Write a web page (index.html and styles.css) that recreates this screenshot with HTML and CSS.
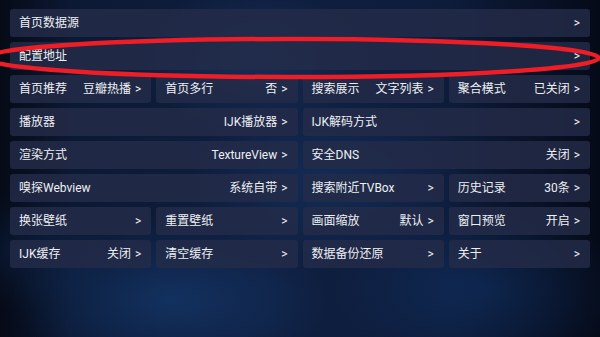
FILE: index.html
```html
<!DOCTYPE html>
<html lang="zh">
<head>
<meta charset="utf-8">
<link rel="stylesheet" href="styles.css">
</head>
<body>
<div class="screen">
  <div class="grid">
    <div class="item full"><span>首页数据源</span><span class="val">&gt;</span></div>
    <div class="item full"><span>配置地址</span><span class="val">&gt;</span></div>

    <div class="item"><span>首页推荐</span><span class="val">豆瓣热播 &gt;</span></div>
    <div class="item"><span>首页多行</span><span class="val">否 &gt;</span></div>
    <div class="item"><span>搜索展示</span><span class="val">文字列表 &gt;</span></div>
    <div class="item"><span>聚合模式</span><span class="val">已关闭 &gt;</span></div>

    <div class="item half"><span>播放器</span><span class="val">IJK播放器 &gt;</span></div>
    <div class="item half"><span>IJK解码方式</span><span class="val">&gt;</span></div>

    <div class="item half"><span>渲染方式</span><span class="val">TextureView &gt;</span></div>
    <div class="item half"><span>安全DNS</span><span class="val">关闭 &gt;</span></div>

    <div class="item half"><span>嗅探Webview</span><span class="val">系统自带 &gt;</span></div>
    <div class="item"><span>搜索附近TVBox</span><span class="val">&gt;</span></div>
    <div class="item"><span>历史记录</span><span class="val">30条 &gt;</span></div>

    <div class="item"><span>换张壁纸</span><span class="val">&gt;</span></div>
    <div class="item"><span>重置壁纸</span><span class="val">&gt;</span></div>
    <div class="item"><span>画面缩放</span><span class="val">默认 &gt;</span></div>
    <div class="item"><span>窗口预览</span><span class="val">开启 &gt;</span></div>

    <div class="item"><span>IJK缓存</span><span class="val">关闭 &gt;</span></div>
    <div class="item"><span>清空缓存</span><span class="val">&gt;</span></div>
    <div class="item"><span>数据备份还原</span><span class="val">&gt;</span></div>
    <div class="item"><span>关于</span><span class="val">&gt;</span></div>
  </div>
  <svg class="mark" viewBox="0 0 600 337" width="600" height="337">
    <ellipse cx="292" cy="58" rx="307" ry="19" fill="none" stroke="#ee1d26" stroke-width="4.5"/>
  </svg>
</div>
</body>
</html>
```
FILE: styles.css
```css
html, body {
  margin: 0;
  padding: 0;
}
body {
  width: 600px;
  height: 337px;
  overflow: hidden;
  font-family: Roboto, "Noto Sans CJK SC", sans-serif;
  color: #eef0f4;
}
.screen {
  position: relative;
  width: 600px;
  height: 337px;
  box-sizing: border-box;
  padding: 9px 10px 0 10px;
  background:
    radial-gradient(ellipse 120px 70px at 250px 60px, rgba(40,80,140,0.3), transparent),
    radial-gradient(ellipse 140px 90px at 330px 180px, rgba(30,75,140,0.3), transparent),
    radial-gradient(ellipse 160px 80px at 170px 300px, rgba(25,80,150,0.4), transparent),
    radial-gradient(ellipse 150px 80px at 480px 290px, rgba(20,70,140,0.3), transparent),
    radial-gradient(ellipse 90px 60px at 20px 250px, rgba(20,60,120,0.25), transparent),
    linear-gradient(90deg, #050a16 0%, #0c1935 12%, #0f1f40 45%, #0d1c3b 75%, #050a18 100%);
}
.grid {
  display: grid;
  grid-template-columns: repeat(4, 1fr);
  grid-auto-rows: 28px;
  gap: 5px;
}
.item {
  display: flex;
  align-items: center;
  justify-content: space-between;
  padding: 0 10px 0 9px;
  border-radius: 3px;
  background: rgba(36, 44, 72, 0.8);
  font-size: 12px;
  line-height: 14px;
  white-space: nowrap;
}
.full { grid-column: span 4; }
.half { grid-column: span 2; }
.val { text-align: right; word-spacing: 1px; }
.mark {
  position: absolute;
  left: 0;
  top: 0;
  pointer-events: none;
}
```
